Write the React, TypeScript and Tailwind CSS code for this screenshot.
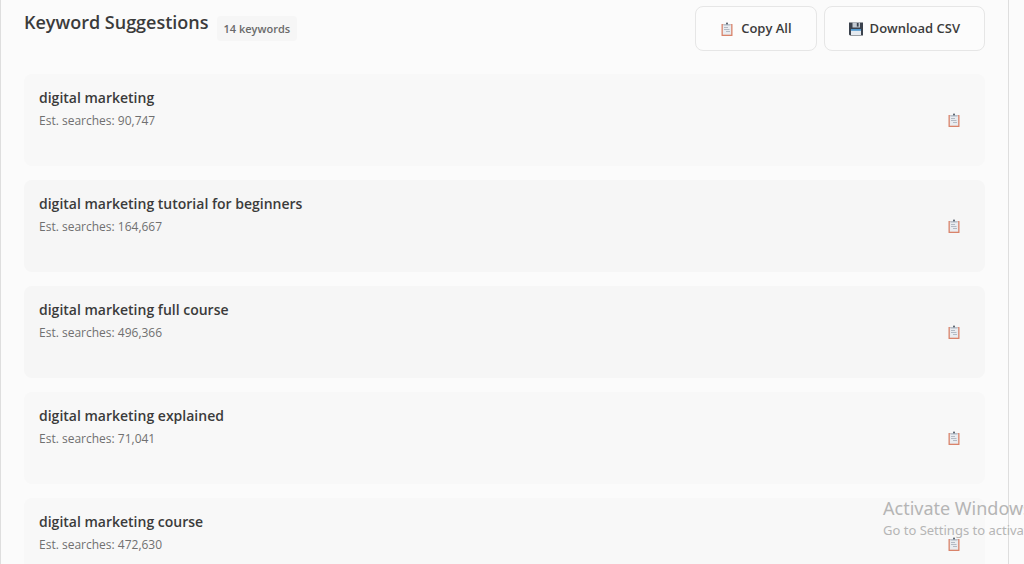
const keywords = [
  { text: 'digital marketing', searches: 90747, bg: 'bg-[#f8f8f8]' },
  { text: 'digital marketing tutorial for beginners', searches: 164667, bg: 'bg-[#f6f6f6]' },
  { text: 'digital marketing full course', searches: 496366, bg: 'bg-[#f6f6f6]' },
  { text: 'digital marketing explained', searches: 71041, bg: 'bg-[#f8f8f8]' },
  { text: 'digital marketing course', searches: 472630, bg: 'bg-[#f8f8f8]' },
];

const ClipboardIcon = () => (
  <svg className="w-3.5 h-3.5" viewBox="0 0 14 14" aria-hidden="true">
    <rect x="1.5" y="2" width="11" height="12" rx="0.6" fill="#d9836a" />
    <rect x="2.8" y="2.4" width="8.4" height="10.3" fill="#e9ecf0" />
    <path d="M3.5 2h7v1.6h-7z" fill="#b8c2cc" />
    <rect x="6" y="0.6" width="2" height="2" rx="0.8" fill="#59636e" />
    <path d="M4 5.5h4M4 7.5h5.5M6 9.5h4" stroke="#b3bac4" strokeWidth="1" />
  </svg>
);

const FloppyIcon = () => (
  <svg className="w-3.5 h-3.5" viewBox="0 0 14 14" aria-hidden="true">
    <path d="M0 0.5h14v13h-13l-1-1z" fill="#3b424d" />
    <rect x="3.5" y="0.5" width="7.5" height="5" fill="#c3cad2" />
    <rect x="7.8" y="1" width="1.8" height="3.6" fill="#39414c" />
    <rect x="2" y="7" width="10" height="6" fill="#e5eaf0" />
    <rect x="2" y="7" width="10" height="1.8" fill="#4f98cf" />
  </svg>
);

const actionClass =
  'flex items-center gap-[7px] h-[45px] px-6 rounded-lg border border-[#e6e6e6] bg-[#fcfcfc] text-[13px] font-semibold text-[#3b3b3b]';

const App = () => {
  return (
    <div className="relative h-screen overflow-hidden bg-[#fbfbfb] pr-[15px] font-['Open_Sans',sans-serif] text-[#3b3b3b]">
      <main className="min-h-full border-x border-[#dedede] px-[23px] pt-1.5">
        <header className="flex items-center justify-between mb-[23px]">
          <div className="flex items-center gap-2">
            <h2 className="mb-[13px] text-[18px] leading-8 font-semibold">Keyword Suggestions</h2>
            <span className="px-[7px] rounded bg-[#f6f6f6] text-[11px] leading-[25px] font-semibold text-[#6a6a6a]">
              14 keywords
            </span>
          </div>
          <div className="flex gap-[7px]">
            <button type="button" className={actionClass}>
              <ClipboardIcon />
              Copy All
            </button>
            <button type="button" className={actionClass}>
              <FloppyIcon />
              Download CSV
            </button>
          </div>
        </header>

        <ul className="flex flex-col gap-3.5">
          {keywords.map((keyword) => (
            <li
              key={keyword.text}
              className={`flex items-center justify-between h-[92px] shrink-0 rounded-lg pl-[15px] pr-4 ${keyword.bg}`}
            >
              <div className="self-start pt-3">
                <h3 className="text-[14px] leading-6 font-semibold">{keyword.text}</h3>
                <p className="text-[12px] leading-[22px] text-[#707070]">
                  Est. searches: {keyword.searches.toLocaleString('en-US')}
                </p>
              </div>
              <button type="button" aria-label={`Copy ${keyword.text}`} className="p-2">
                <ClipboardIcon />
              </button>
            </li>
          ))}
        </ul>
      </main>

      <div className="absolute left-[883px] bottom-6 whitespace-nowrap font-['Noto_Sans',sans-serif] text-[#b5b5b5] pointer-events-none">
        <p className="text-lg leading-6">Activate Windows</p>
        <p className="text-[13px] leading-5">Go to Settings to activate Windows.</p>
      </div>
    </div>
  );
};

export default App;
